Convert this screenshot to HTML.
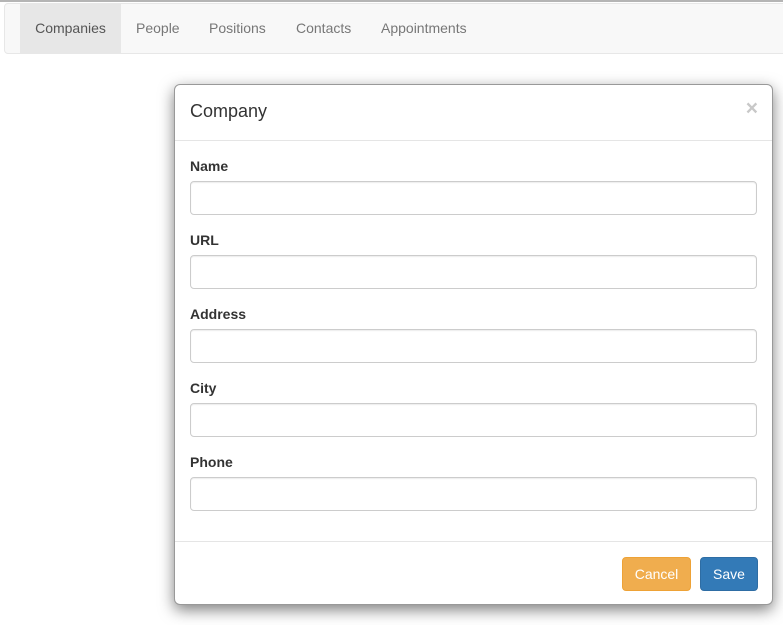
<!DOCTYPE html>
<html><head><style>
body{margin:0;width:783px;height:625px;background:#fff;font-family:"Liberation Sans",sans-serif;font-size:14px;position:relative;overflow:hidden}
.top{position:absolute;left:0;top:0;width:783px;height:2px;background:#b5b5b5}
.nav{position:absolute;left:4px;top:3px;width:790px;height:49px;background:#f8f8f8;border:1px solid #e7e7e7;border-radius:4px}
.nav a{position:absolute;top:0;height:49px;line-height:49px;color:#777;font-size:14px;text-decoration:none}
.modal{position:absolute;left:174px;top:84px;width:597px;height:519px;border:1px solid #999;border-radius:6px;box-shadow:0 5px 15px rgba(0,0,0,.5);background:#fff}
.hdr{height:55px;border-bottom:1px solid #e5e5e5;position:relative}
.hdr h4{margin:0;position:absolute;left:15px;top:16px;font-size:18px;font-weight:normal;color:#333}
.x{position:absolute;right:14px;top:12px;font-size:21px;font-weight:bold;color:#c8c8c8}
label{position:absolute;left:15px;font-weight:bold;color:#333}
.in{position:absolute;left:15px;width:565px;height:32px;border:1px solid #ccc;border-radius:4px;box-shadow:inset 0 1px 1px rgba(0,0,0,.075)}
.ftr{position:absolute;left:0;top:456px;width:597px;border-top:1px solid #e5e5e5}
.btn{position:absolute;top:472px;height:34px;line-height:32px;border-radius:4px;color:#fff;text-align:center;font-size:14px;box-sizing:border-box}
</style></head><body>
<div class="top"></div>
<div class="nav">
<a style="left:15px;width:101px;background:#e7e7e7;color:#555;text-align:center">Companies</a>
<a style="left:131px">People</a>
<a style="left:204px">Positions</a>
<a style="left:291px">Contacts</a>
<a style="left:376px">Appointments</a>
</div>
<div class="modal">
<div class="hdr"><h4>Company</h4><span class="x">×</span></div>
<label style="top:73px">Name</label><div class="in" style="top:96px"></div>
<label style="top:147px">URL</label><div class="in" style="top:170px"></div>
<label style="top:221px">Address</label><div class="in" style="top:244px"></div>
<label style="top:295px">City</label><div class="in" style="top:318px"></div>
<label style="top:369px">Phone</label><div class="in" style="top:392px"></div>
<div class="ftr"></div>
<div class="btn" style="left:447px;width:69px;background:#f0ad4e;border:1px solid #eea236">Cancel</div>
<div class="btn" style="left:525px;width:58px;background:#337ab7;border:1px solid #2e6da4">Save</div>
</div>
</body></html>
